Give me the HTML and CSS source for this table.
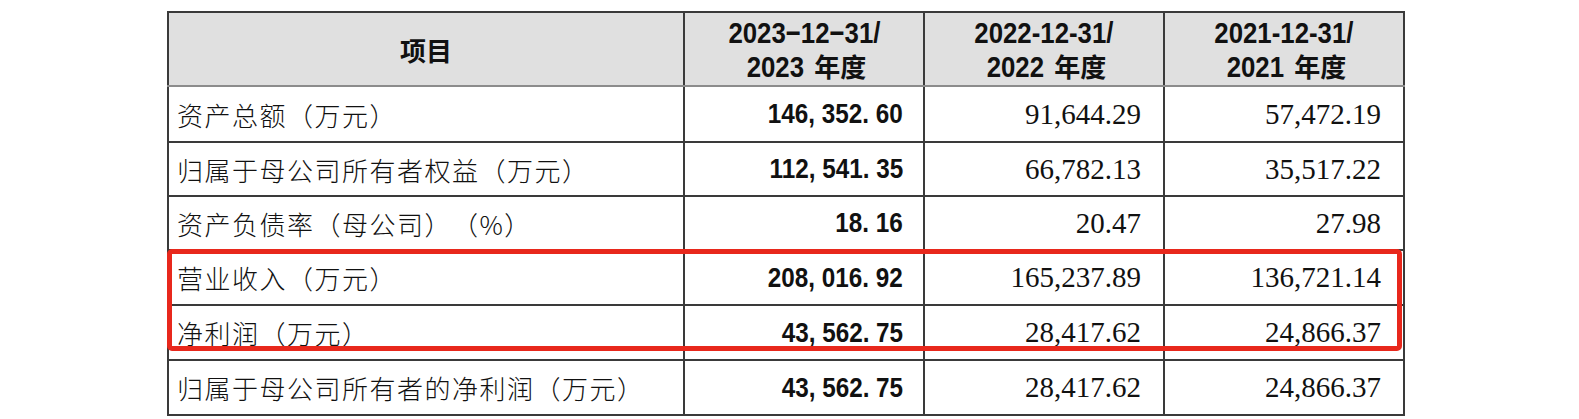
FILE: index.html
```html
<!DOCTYPE html>
<html lang="zh-CN">
<head>
<meta charset="utf-8">
<title>主要财务数据</title>
<link rel="stylesheet" href="styles.css">
</head>
<body>
<div class="page">
  <div class="wrap">
    <table class="fin">
      <colgroup>
        <col class="c-label">
        <col class="c-num">
        <col class="c-num">
        <col class="c-num">
      </colgroup>
      <thead>
        <tr class="head">
          <th class="h-item">项目</th>
          <th class="h-date"><span class="d">2023−12−31/</span><br><span class="d">2023</span> 年度</th>
          <th class="h-date"><span class="d">2022-12-31/</span><br><span class="d">2022</span> 年度</th>
          <th class="h-date"><span class="d">2021-12-31/</span><br><span class="d">2021</span> 年度</th>
        </tr>
      </thead>
      <tbody>
        <tr class="r1">
          <td class="label">资产总额（万元）</td>
          <td class="bold"><span class="bn">146, 352. 60</span></td>
          <td class="num">91,644.29</td>
          <td class="num">57,472.19</td>
        </tr>
        <tr class="r2">
          <td class="label">归属于母公司所有者权益（万元）</td>
          <td class="bold"><span class="bn">112, 541. 35</span></td>
          <td class="num">66,782.13</td>
          <td class="num">35,517.22</td>
        </tr>
        <tr class="r3">
          <td class="label">资产负债率（母公司）（%）</td>
          <td class="bold"><span class="bn">18. 16</span></td>
          <td class="num">20.47</td>
          <td class="num">27.98</td>
        </tr>
        <tr class="r4">
          <td class="label">营业收入（万元）</td>
          <td class="bold"><span class="bn">208, 016. 92</span></td>
          <td class="num">165,237.89</td>
          <td class="num">136,721.14</td>
        </tr>
        <tr class="r5">
          <td class="label">净利润（万元）</td>
          <td class="bold"><span class="bn">43, 562. 75</span></td>
          <td class="num">28,417.62</td>
          <td class="num">24,866.37</td>
        </tr>
        <tr class="r6">
          <td class="label">归属于母公司所有者的净利润（万元）</td>
          <td class="bold"><span class="bn">43, 562. 75</span></td>
          <td class="num">28,417.62</td>
          <td class="num">24,866.37</td>
        </tr>
      </tbody>
    </table>
    <div class="highlight"></div>
  </div>
</div>
</body>
</html>
```
FILE: styles.css
```css
html, body {
  margin: 0;
  padding: 0;
  background: #ffffff;
}

.page {
  padding: 11px 0 0 167px;
}

.wrap {
  position: relative;
  width: 1236px;
}

.fin {
  border-collapse: collapse;
  table-layout: fixed;
  width: 1236px;
  color: #111;
}

.c-label { width: 516px; }
.c-num { width: 240px; }

.fin th,
.fin td {
  border: 2px solid #3a3a3a;
  padding: 0;
}

.fin .head {
  height: 74px;
  background: #e0e0e0;
}

.fin .head th {
  border-bottom-color: #8c8c8c;
}

.fin th.h-item {
  font-family: "Noto Sans CJK SC", sans-serif;
  font-weight: 700;
  font-size: 26px;
  text-align: center;
}

.fin th.h-date {
  font-family: "Noto Sans CJK SC", sans-serif;
  font-weight: 700;
  font-size: 26px;
  line-height: 33px;
  text-align: center;
  white-space: nowrap;
}

.h-date .d {
  display: inline-block;
  font-family: "Liberation Sans", sans-serif;
  font-weight: 700;
  font-size: 30px;
  transform: scaleX(0.86);
  transform-origin: center center;
}

.r1 { height: 56px; }
.r2 { height: 54px; }
.r3 { height: 54px; }
.r4 { height: 55px; }
.r5 { height: 55px; }
.r6 { height: 55px; }

.fin td.label {
  font-family: "Noto Sans CJK SC", sans-serif;
  font-weight: 300;
  font-size: 26px;
  letter-spacing: 1.5px;
  text-spacing-trim: space-all;
  padding-left: 8px;
  text-align: left;
  white-space: nowrap;
}

.fin td.bold {
  text-align: right;
  padding-right: 20px;
  white-space: nowrap;
}

.bn {
  display: inline-block;
  font-family: "Liberation Sans", sans-serif;
  font-weight: 700;
  font-size: 28px;
  white-space: pre;
  transform: scaleX(0.867);
  transform-origin: right center;
}

.fin td.num {
  font-family: "Liberation Serif", serif;
  font-size: 29px;
  text-align: right;
  padding-right: 22px;
  white-space: nowrap;
}

.highlight {
  position: absolute;
  left: 0;
  top: 238px;
  width: 1235px;
  height: 102px;
  box-sizing: border-box;
  border: 5px solid #e8281c;
  border-radius: 5px;
  pointer-events: none;
}
```
